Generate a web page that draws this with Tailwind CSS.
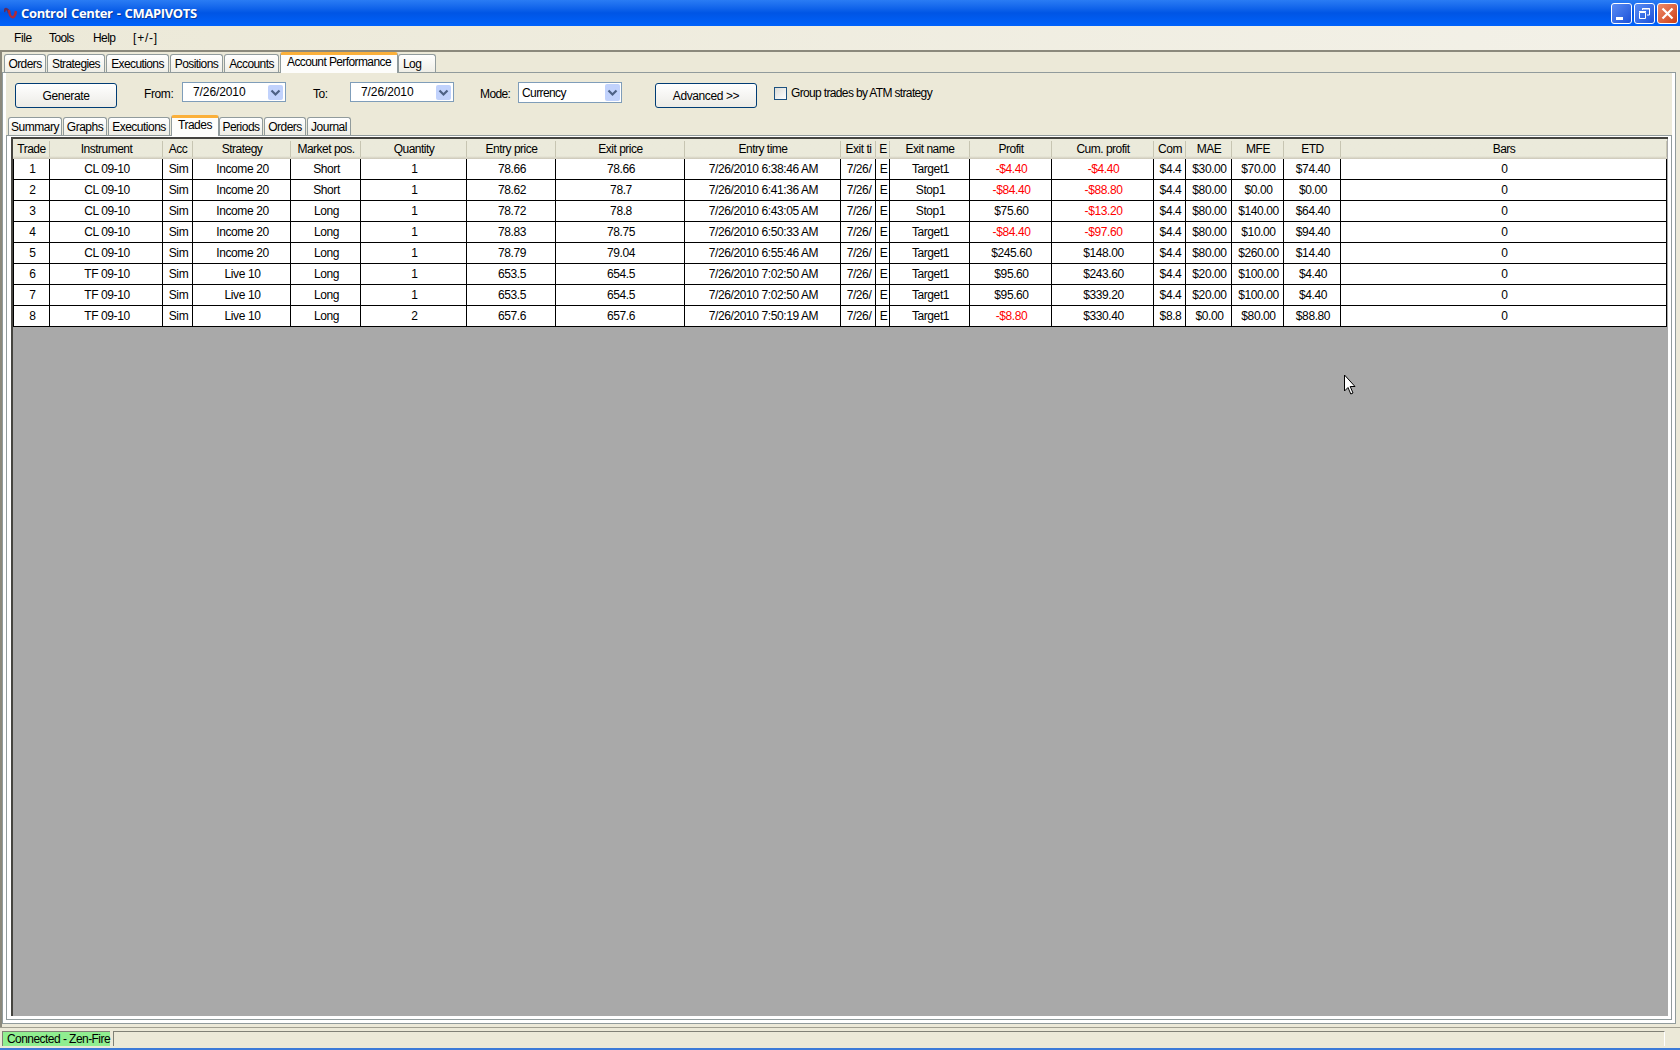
<!DOCTYPE html>
<html lang="en">
<head>
    <meta charset="UTF-8">
    <meta name="viewport" content="width=device-width, initial-scale=1.0">
    <title>Control Center - CMAPIVOTS</title>
    <script src="https://cdn.jsdelivr.net/npm/@tailwindcss/browser@4"></script>
</head>
<body class="relative w-[1680px] h-[1050px] overflow-hidden flex flex-col bg-[#ece9d8] text-black text-[12px] leading-[14px] tracking-[-0.4px] whitespace-nowrap font-['Liberation_Sans',Arial,sans-serif]">
    <!-- title bar -->
    <header class="h-[26px] shrink-0 flex items-center pl-1 pr-[2px] bg-linear-to-b from-[#2a7cf4] via-[#0055e5] to-[#0062fb]">
        <svg class="w-[13px] h-[14px] mr-1" viewBox="0 0 13 14" fill="none" stroke-width="2.500">
            <path d="M0 6 C1 2 4 2 5 7" stroke="#5e2c5c"/>
            <path d="M5 4 C6 14 11 13 12 5" stroke="#b02a38"/>
        </svg>
        <h1 class="grow font-['Open_Sans',sans-serif] font-bold text-[13px] tracking-[-0.35px] text-white [text-shadow:1px_1px_#0a3a9a] [word-spacing:1px]">Control Center - CMAPIVOTS</h1>
        <div class="flex gap-[2px]">
            <div class="size-[21px] rounded-[3px] border border-white bg-linear-to-br from-[#5a8cf4] to-[#1c50d8]">
                <svg viewBox="0 0 19 19"><path d="M4 13h7v3H4z" fill="#fff"/></svg>
            </div>
            <div class="size-[21px] rounded-[3px] border border-white bg-linear-to-br from-[#5a8cf4] to-[#1c50d8]">
                <svg viewBox="0 0 19 19" fill="none" stroke="#fff"><path d="M4.500 8.500h6v6h-6zM4 7.500h7M7.500 6v-1.500h7v6.500h-2.500M7 5h8"/></svg>
            </div>
            <div class="size-[21px] rounded-[3px] border border-white bg-linear-to-br from-[#ee8a68] to-[#cc3c10]">
                <svg viewBox="0 0 19 19" fill="none" stroke="#fff" stroke-width="2.200"><path d="M4.500 4.500l10 10M14.500 4.500l-10 10"/></svg>
            </div>
        </div>
    </header>

    <nav class="h-6 shrink-0 flex items-center pl-[14px] bg-linear-to-r from-[#ece9d8] to-[#f3f1e8]">
        <span class="w-[35px]">File</span>
        <span class="w-[44px] tracking-[-0.6px]">Tools</span>
        <span class="w-[40px] tracking-[-0.6px]">Help</span>
        <span class="tracking-[0.8px]">[+/-]</span>
    </nav>

    <main class="h-[977px] shrink-0 flex flex-col pl-[2px] pr-[4px] pb-[3px] border-t-2 border-l-2 border-[#8b897c]">
        <!-- main tabs -->
        <div id="main-tabs" class="h-5 shrink-0 flex items-end tracking-[-0.6px]"></div>

        <section class="grow flex flex-col -ml-[2px] p-[3px] pt-0 border border-[#919b9c] bg-white">
            <div class="grow flex flex-col bg-[#ece9d8]">
                <div class="h-[43px] shrink-0 flex items-start pt-[9px] pl-[9px]">
                    <button class="mt-px w-[102px] h-[25px] rounded-[3px] border border-[#003c74] bg-linear-to-b from-white to-[#ecebe6]">Generate</button>
                    <span class="mt-[5px] ml-[27px] w-[38px]">From:</span>
                    <div class="w-[104px] h-5 flex items-center justify-between border border-[#7f9db9] bg-white pl-[10px] pr-px tracking-[-0.1px]">7/26/2010
                        <i class="w-[15px] h-[15px] mr-px rounded-[2px] bg-[#c1d2fc]"><svg viewBox="0 0 15 15" fill="none" stroke="#4d6185" stroke-width="2.200"><path d="M3.500 5.500l4 4 4-4"/></svg></i>
                    </div>
                    <span class="mt-[5px] ml-[27px] w-[37px]">To:</span>
                    <div class="w-[104px] h-5 flex items-center justify-between border border-[#7f9db9] bg-white pl-[10px] pr-px tracking-[-0.1px]">7/26/2010
                        <i class="w-[15px] h-[15px] mr-px rounded-[2px] bg-[#c1d2fc]"><svg viewBox="0 0 15 15" fill="none" stroke="#4d6185" stroke-width="2.200"><path d="M3.500 5.500l4 4 4-4"/></svg></i>
                    </div>
                    <span class="mt-[5px] ml-[26px] w-[38px] tracking-[-0.6px]">Mode:</span>
                    <div class="w-[104px] h-[21px] flex items-center justify-between border border-[#7f9db9] bg-white pl-[3px] pr-px tracking-[-0.6px]">Currency
                        <i class="w-[15px] h-[17px] rounded-[2px] bg-[#c1d2fc]"><svg viewBox="0 0 15 17" fill="none" stroke="#4d6185" stroke-width="2.200"><path d="M3.500 6.500l4 4 4-4"/></svg></i>
                    </div>
                    <button class="mt-px ml-[33px] w-[102px] h-[25px] rounded-[3px] border border-[#003c74] bg-linear-to-b from-white to-[#ecebe6]">Advanced &gt;&gt;</button>
                    <i class="mt-[5px] ml-[17px] size-[13px] border border-[#1c5180] bg-linear-to-br from-[#dcdcd7] to-white"></i>
                    <span class="mt-1 ml-1 tracking-[-0.65px]">Group trades by ATM strategy</span>
                </div>

                <!-- report tabs -->
                <div id="report-tabs" class="h-[19px] shrink-0 flex items-end pl-[2px] tracking-[-0.5px]"></div>

                <div class="grow flex flex-col border border-[#919b9c] bg-white p-[3px] pt-px pl-1">
                    <div class="grow flex flex-col border-t-2 border-l-2 border-[#45443f] bg-[#a9a9a9]">
                        <table class="table-fixed w-[1654px] text-center border-separate border-spacing-0">
                            <colgroup id="cols"></colgroup>
                            <thead><tr id="head" class="h-5 bg-linear-to-b from-[#ebeadb] from-85% to-[#cbc7b8]"></tr></thead>
                            <tbody id="rows" class="bg-white"></tbody>
                        </table>
                    </div>
                </div>
            </div>
        </section>
    </main>

    <!-- status bar -->
    <footer class="grow flex items-start pl-[2px] pr-[15px] pt-[3px] gap-[3px] border-t border-t-[#a19f91] border-b-2 border-b-[#3c7ad8]">
        <div class="w-[108px] h-[15px] border-t border-l border-[#808076] bg-[#90ee90] pl-1 pt-px leading-[13px] tracking-[-0.55px]">Connected - Zen-Fire</div>
        <div class="grow h-[15px] border-t border-l border-[#808076] border-r border-r-white"></div>
    </footer>

    <svg class="absolute left-[1344px] top-[374px] w-3 h-[21px]" viewBox="0 0 12 21"><path d="M.5 1v16l3.500-3.500 2.800 6.500 2.200-1-2.800-6.500H11z" fill="#fff" stroke="#000"/></svg>

    <script>
        const columns = [
            ['Trade', 37], ['Instrument', 113], ['Acc', 30], ['Strategy', 98], ['Market pos.', 70],
            ['Quantity', 106], ['Entry price', 89], ['Exit price', 129], ['Entry time', 156],
            ['Exit ti', 35], ['E', 14], ['Exit name', 80], ['Profit', 82], ['Cum. profit', 102],
            ['Com', 32], ['MAE', 46], ['MFE', 52], ['ETD', 57], ['Bars', 326]
        ]
        const trades = [
            '1|CL 09-10|Sim|Income 20|Short|1|78.66|78.66|7/26/2010 6:38:46 AM|7/26/|E|Target1|-$4.40|-$4.40|$4.4|$30.00|$70.00|$74.40|0',
            '2|CL 09-10|Sim|Income 20|Short|1|78.62|78.7|7/26/2010 6:41:36 AM|7/26/|E|Stop1|-$84.40|-$88.80|$4.4|$80.00|$0.00|$0.00|0',
            '3|CL 09-10|Sim|Income 20|Long|1|78.72|78.8|7/26/2010 6:43:05 AM|7/26/|E|Stop1|$75.60|-$13.20|$4.4|$80.00|$140.00|$64.40|0',
            '4|CL 09-10|Sim|Income 20|Long|1|78.83|78.75|7/26/2010 6:50:33 AM|7/26/|E|Target1|-$84.40|-$97.60|$4.4|$80.00|$10.00|$94.40|0',
            '5|CL 09-10|Sim|Income 20|Long|1|78.79|79.04|7/26/2010 6:55:46 AM|7/26/|E|Target1|$245.60|$148.00|$4.4|$80.00|$260.00|$14.40|0',
            '6|TF 09-10|Sim|Live 10|Long|1|653.5|654.5|7/26/2010 7:02:50 AM|7/26/|E|Target1|$95.60|$243.60|$4.4|$20.00|$100.00|$4.40|0',
            '7|TF 09-10|Sim|Live 10|Long|1|653.5|654.5|7/26/2010 7:02:50 AM|7/26/|E|Target1|$95.60|$339.20|$4.4|$20.00|$100.00|$4.40|0',
            '8|TF 09-10|Sim|Live 10|Long|2|657.6|657.6|7/26/2010 7:50:19 AM|7/26/|E|Target1|-$8.80|$330.40|$8.8|$0.00|$80.00|$88.80|0'
        ]
        const mainTabs = [['Orders', 42], ['Strategies', 58], ['Executions', 63], ['Positions', 53], ['Accounts', 55], ['Account Performance', 118], ['Log', 38]]
        const reportTabs = [['Summary', 54], ['Graphs', 44], ['Executions', 62], ['Trades', 48], ['Periods', 44], ['Orders', 42], ['Journal', 44]]

        function renderTabs(id, tabs, active) {
            document.getElementById(id).innerHTML = tabs.map(([name, width], i) => {
                const style = i === active
                    ? 'relative z-10 h-[21px] -mb-px border-t-3 border-t-[#fbb03a] bg-[#fdfdfb] text-center'
                    : 'h-[18px] pt-[2px] mr-px border-t bg-linear-to-b from-white to-[#efeee6]'
                const align = name === 'Log' ? 'pl-1' : 'text-center'
                return `<div class="shrink-0 rounded-t-[3px] border-x border-[#919b9c] ${align} ${style}" style="width:${width}px">${name}</div>`
            }).join('')
        }
        renderTabs('main-tabs', mainTabs, 5)
        renderTabs('report-tabs', reportTabs, 3)

        document.getElementById('cols').innerHTML = columns.map(c => `<col style="width:${c[1]}px">`).join('')
        document.getElementById('head').innerHTML = columns.map(c =>
            `<th class="p-0 font-normal overflow-hidden tracking-[-0.5px]"><div class="h-4 pt-px pl-px border-r border-[#c7c5b2]">${c[0]}</div></th>`).join('')
        document.getElementById('rows').innerHTML = trades.map(t =>
            `<tr class="h-[21px]">${t.split('|').map(v =>
                `<td class="p-0 pl-[2px] overflow-hidden border-r border-b border-black first:border-l ${v.startsWith('-$') ? 'text-[#ff0000]' : ''}">${v}</td>`).join('')}</tr>`).join('')
    </script>
</body>
</html>
